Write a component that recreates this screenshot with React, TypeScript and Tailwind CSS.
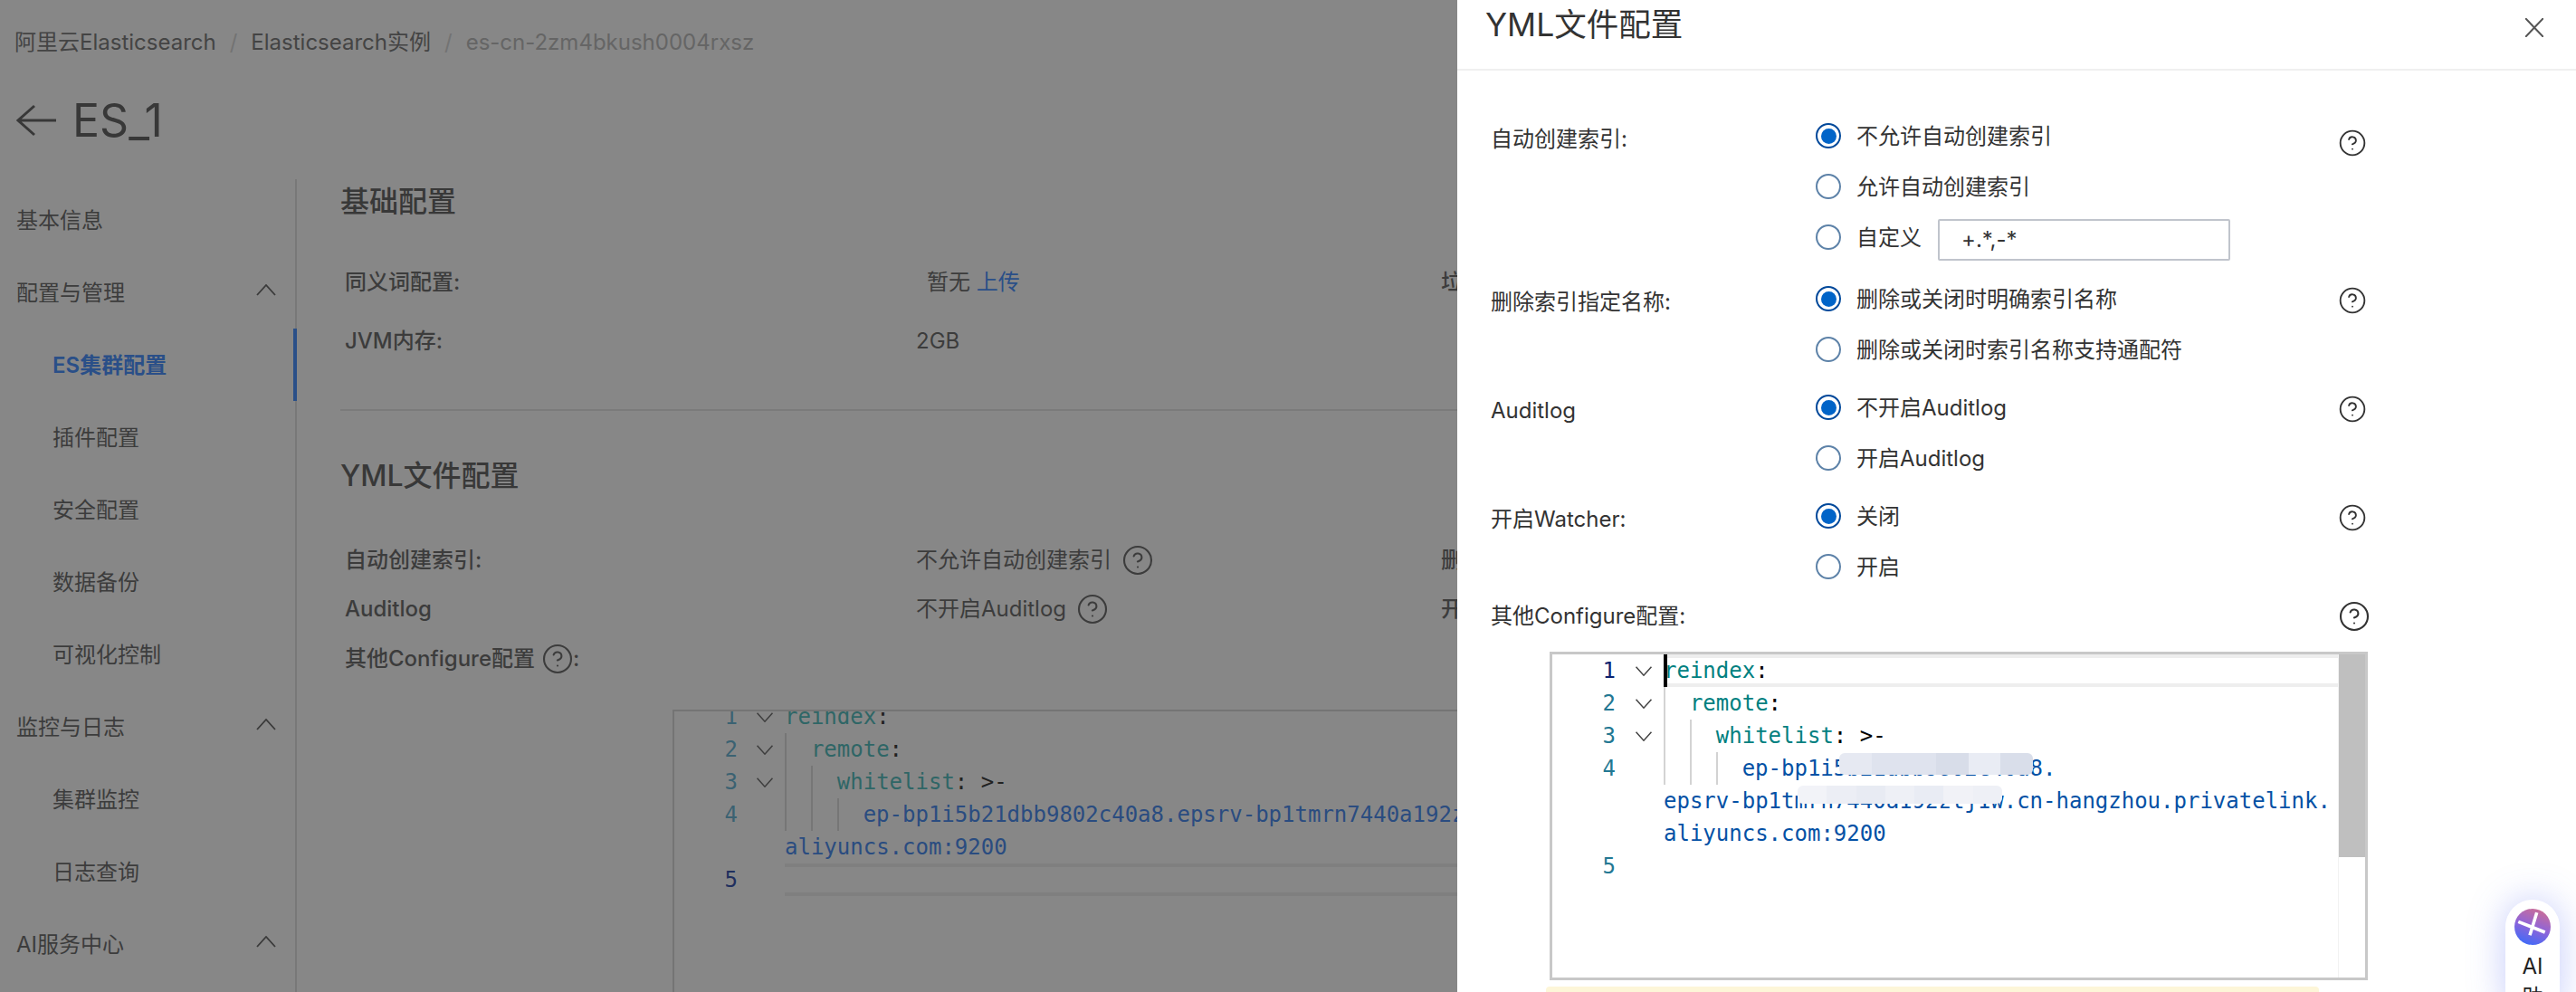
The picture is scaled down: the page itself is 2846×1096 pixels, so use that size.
import React from 'react';
import { CircleHelp } from 'lucide-react';

const sans = "font-['Inter','Noto_Sans_CJK_SC',sans-serif]";
const mono = "font-['DejaVu_Sans_Mono','Noto_Sans_CJK_SC',monospace]";

function Chevron({ up, className }: { up?: boolean; className?: string }) {
  return (
    <svg width="22" height="13" viewBox="0 0 22 13" fill="none" className={className}>
      <polyline points={up ? '1,12 11,1 21,12' : '1,1 11,12 21,1'} stroke="currentColor" strokeWidth="1.8" />
    </svg>
  );
}

function NavItem({ label, sub, open, active }: { label: string; sub?: boolean; open?: boolean; active?: boolean }) {
  return (
    <div className={`h-[80px] flex items-center justify-between pr-[19px] -mr-[2px] border-r-4 ${active ? 'border-[#2a4f88]' : 'border-transparent'} ${sub ? 'pl-[58px]' : 'pl-[18px]'}`}>
      <span className={`mt-[2px] ${active ? 'font-semibold text-[#2a4f88]' : 'text-[#3c3c3c]'}`}>{label}</span>
      {open && <Chevron up className="text-[#3a3a3a] -mt-[6px]" />}
    </div>
  );
}

type LineProps = {
  n?: number;
  fold?: boolean;
  guides?: number;
  active?: boolean;
  dim?: boolean;
  children?: React.ReactNode;
};

function CodeLine({ n, fold, guides = 0, active, dim, children }: LineProps) {
  const numColor = dim
    ? n === 5 ? 'text-[#1f2f5e]' : 'text-[#3b6272]'
    : active ? 'text-[#0b216f]' : 'text-[#237893]';
  return (
    <div className="flex h-[36px] leading-[36px]">
      <div className={`w-[70px] text-right shrink-0 ${numColor}`}>{n}</div>
      <div className={`w-[20px] shrink-0 flex items-center ${dim ? 'ml-[20px] mr-[12px] text-[#3e3e3e]' : 'ml-[21px] mr-[12px] text-[#444]'}`}>
        {fold && <Chevron className="w-[20px] h-[11px]" />}
      </div>
      <div className={`flex-1 flex whitespace-pre min-w-0 ${active ? (dim ? 'border-y-4 border-[#7f7f7f] leading-[28px]' : 'border-y-4 border-[#eeeeee] leading-[28px]') : ''}`}>
        {Array.from({ length: guides }).map((_, i) => (
          <span key={i} className={`inline-block w-[2ch] shrink-0 border-l-2 ${dim ? 'border-[#767676]' : 'border-[#d3d3d3]'}`} />
        ))}
        {children}
      </div>
    </div>
  );
}

function Radio({ label, checked, children }: { label: string; checked?: boolean; children?: React.ReactNode }) {
  return (
    <div className="h-[56px] flex items-center">
      <span className={`w-[28px] h-[28px] rounded-full border-2 bg-white flex items-center justify-center shrink-0 ${checked ? 'border-[#00489a]' : 'border-[#5d82a8]'}`}>
        {checked && <span className="w-[17px] h-[17px] rounded-full bg-[#0064c8]" />}
      </span>
      <span className="ml-[17px] mt-[2px] text-[#333]">{label}</span>
      {children}
    </div>
  );
}

function FormRow({ label, options, className, helpClass, extra }: { label: string; options: [string, boolean][]; className?: string; helpClass: string; extra?: React.ReactNode }) {
  return (
    <div className={`grid grid-cols-[359px_579px_30px] ${className ?? ''}`}>
      <div className="h-[56px] mt-[4px] flex items-center text-[#333]">{label}</div>
      <div>
        {options.map(([text, checked]) => (
          <Radio key={text} label={text} checked={checked} />
        ))}
        {extra}
      </div>
      <div className={`h-[56px] flex items-center ${helpClass}`}>
        <CircleHelp size={36} strokeWidth={1.4} className="text-[#333] -ml-[2px]" />
      </div>
    </div>
  );
}

function Breadcrumb() {
  return (
    <div className="h-[94px] flex items-center pl-[16px] text-[#444]">
      <span>阿里云Elasticsearch</span>
      <span className="mx-[15px] text-[#737373]">/</span>
      <span>Elasticsearch实例</span>
      <span className="mx-[15px] text-[#737373]">/</span>
      <span className="text-[#656565]">es-cn-2zm4bkush0004rxsz</span>
    </div>
  );
}

function LeftPane() {
  const nav: { label: string; sub?: boolean; open?: boolean; active?: boolean }[] = [
    { label: '基本信息' },
    { label: '配置与管理', open: true },
    { label: 'ES集群配置', sub: true, active: true },
    { label: '插件配置', sub: true },
    { label: '安全配置', sub: true },
    { label: '数据备份', sub: true },
    { label: '可视化控制', sub: true },
    { label: '监控与日志', open: true },
    { label: '集群监控', sub: true },
    { label: '日志查询', sub: true },
    { label: 'AI服务中心', open: true },
  ];
  const key = 'text-[#2f6666]';
  const val = 'text-[#2a4c80]';
  return (
    <div className="w-[1610px] shrink-0 h-full bg-[#878787] overflow-hidden flex flex-col">
      <Breadcrumb />
      <div className="h-[78px] flex items-center pl-[18px] text-[#383838]">
        <svg width="44" height="36" viewBox="0 0 44 36" fill="none" stroke="currentColor" strokeWidth="3">
          <path d="M20 2 L2 18 L20 34 M2 18 H44" />
        </svg>
        <span className="ml-[18px] text-[50px] leading-none">ES_1</span>
      </div>
      <div className="mt-[26px] flex flex-1 min-h-0">
        <div className="w-[328px] shrink-0 border-r-2 border-[#787878] pt-[5px]">
          {nav.map((item) => (
            <NavItem key={item.label} {...item} />
          ))}
        </div>
        <div className="flex-1 min-w-0 pl-[48px] text-[#3c3c3c] whitespace-nowrap">
          <div className="h-[50px] flex items-center text-[32px] font-medium text-[#383838]">基础配置</div>
          <div className="mt-[44px] h-[40px] pl-[5px] flex items-center">
            <span className="w-[643px] shrink-0 font-medium">同义词配置:</span>
            <span className="w-[568px] shrink-0">暂无 <span className="text-[#2a4f88]">上传</span></span>
            <span className="shrink-0 font-medium">垃圾</span>
          </div>
          <div className="mt-[25px] h-[40px] pl-[5px] flex items-center">
            <span className="w-[631px] shrink-0 font-medium">JVM内存:</span>
            <span>2GB</span>
          </div>
          <div className="mt-[55px] h-[2px] bg-[#7b7b7b]" />
          <div className="mt-[47px] h-[50px] flex items-center text-[32px] font-medium text-[#383838]">YML文件配置</div>
          <div className="mt-[48px] h-[40px] pl-[5px] flex items-center">
            <span className="w-[631px] shrink-0 font-medium">自动创建索引:</span>
            <span className="w-[580px] shrink-0 flex items-center gap-[11px]">不允许自动创建索引 <CircleHelp size={36} strokeWidth={1.4} /></span>
            <span className="shrink-0 font-medium">删除</span>
          </div>
          <div className="mt-[14px] h-[40px] pl-[5px] flex items-center">
            <span className="w-[631px] shrink-0 font-medium">Auditlog</span>
            <span className="w-[580px] shrink-0 flex items-center gap-[11px]">不开启Auditlog <CircleHelp size={36} strokeWidth={1.4} /></span>
            <span className="shrink-0 font-medium">开启</span>
          </div>
          <div className="mt-[15px] h-[40px] pl-[5px] flex items-center font-medium">
            其他Configure配置 <CircleHelp size={36} strokeWidth={1.4} className="ml-[7px] -mr-[1px]" />:
          </div>
          <div className={`mt-[36px] ml-[367px] h-[400px] border-t-2 border-l-2 border-[#747474] overflow-hidden text-[24px] ${mono}`}>
            <div className="-mt-[12px]">
              <CodeLine dim n={1} fold><span className={key}>reindex</span><span className="text-[#222]">:</span></CodeLine>
              <CodeLine dim n={2} fold guides={1}><span className={key}>remote</span><span className="text-[#222]">:</span></CodeLine>
              <CodeLine dim n={3} fold guides={2}><span className={key}>whitelist</span><span className="text-[#222]">: &gt;-</span></CodeLine>
              <CodeLine dim n={4} guides={3}><span className={val}>ep-bp1i5b21dbb9802c40a8.epsrv-bp1tmrn7440a192ztj1w.cn-hangzhou.privatelink.</span></CodeLine>
              <CodeLine dim><span className={val}>aliyuncs.com:9200</span></CodeLine>
              <CodeLine dim n={5} active />
            </div>
          </div>
        </div>
      </div>
    </div>
  );
}

function BlurPatch({ className, tones }: { className: string; tones: string[] }) {
  return (
    <div className={`absolute flex rounded-[6px] overflow-hidden ${className}`}>
      {tones.map((tone, i) => (
        <div key={i} className={`flex-1 ${tone}`} />
      ))}
    </div>
  );
}

function Editor() {
  const key = 'text-[#008080]';
  const val = 'text-[#0451a5]';
  return (
    <div className={`relative ml-[102px] w-[904px] h-[363px] shrink-0 mt-[11px] border-[3px] border-[#c8c8c8] overflow-hidden text-[24px] ${mono}`}>
      <CodeLine n={1} fold active><span className="w-[4px] bg-black -my-[4px] h-[36px] shrink-0 -mr-[4px]" /><span className={key}>reindex</span><span className="text-black">:</span></CodeLine>
      <CodeLine n={2} fold guides={1}><span className={key}>remote</span><span className="text-black">:</span></CodeLine>
      <CodeLine n={3} fold guides={2}><span className={key}>whitelist</span><span className="text-black">: &gt;-</span></CodeLine>
      <CodeLine n={4} guides={3}><span className={val}>ep-bp1i5b21dbb9802c40a8.</span></CodeLine>
      <CodeLine><span className={val}>epsrv-bp1tmrn7440a192ztj1w.cn-hangzhou.privatelink.</span></CodeLine>
      <CodeLine><span className={val}>aliyuncs.com:9200</span></CodeLine>
      <CodeLine n={5} />
      <BlurPatch
        className="left-[317px] top-[109px] w-[214px] h-[24px]"
        tones={['bg-[#e6e9f2]', 'bg-[#dfe3ee]', 'bg-[#dfe3ee]', 'bg-[#d8dde9]', 'bg-[#e9ecf4]', 'bg-[#d9deea]']}
      />
      <BlurPatch
        className="left-[271px] top-[145px] w-[226px] h-[20px]"
        tones={['bg-[#f2f3f8]', 'bg-[#eceef5]', 'bg-[#e8ebf3]', 'bg-[#eef0f6]', 'bg-[#e9ecf4]', 'bg-[#f1f2f7]', 'bg-[#eef0f6]']}
      />
      <div className="absolute right-0 top-0 bottom-0 w-[30px] border-l border-[#f2f2f2]">
        <div className="h-[224px] bg-[#bfbfbf]" />
      </div>
    </div>
  );
}

function Drawer() {
  return (
    <div className="flex-1 min-w-0 h-full bg-white overflow-hidden flex flex-col">
      <div className="h-[78px] shrink-0 border-b-2 border-[#f0f0f0] flex justify-between pl-[31px] pr-[36px]">
        <div className="h-[56px] flex items-center text-[35.5px] text-[#333]">YML文件配置</div>
        <svg width="20" height="21" viewBox="0 0 20 21" fill="none" stroke="#555" strokeWidth="2" className="mt-[20px]">
          <path d="M0 0 L20 21 M20 0 L0 21" />
        </svg>
      </div>
      <div className="pt-[44px] pl-[37px]">
        <FormRow
          label="自动创建索引:"
          options={[['不允许自动创建索引', true], ['允许自动创建索引', false]]}
          className="mb-[12px]"
          helpClass="mt-[8px]"
          extra={
            <Radio label="自定义">
              <div className="ml-[18px] mt-[6px] w-[323px] h-[46px] border-2 border-[#c0c4cc] rounded-[2px] pl-[24px] flex items-center text-[#333]">+.*,-*</div>
            </Radio>
          }
        />
        <FormRow label="删除索引指定名称:" options={[['删除或关闭时明确索引名称', true], ['删除或关闭时索引名称支持通配符', false]]} className="mb-[8px]" helpClass="mt-[2px]" />
        <FormRow label="Auditlog" options={[['不开启Auditlog', true], ['开启Auditlog', false]]} className="mb-[8px]" helpClass="mt-[2px]" />
        <FormRow label="开启Watcher:" options={[['关闭', true], ['开启', false]]} helpClass="mt-[2px]" />
        <div className="grid grid-cols-[938px_30px] h-[56px] -mt-[1px] items-center">
          <div className="text-[#333]">其他Configure配置:</div>
          <CircleHelp size={36} strokeWidth={1.4} className="text-[#333] -ml-[2px]" />
        </div>
      </div>
      <Editor />
      <div className="ml-[98px] mt-[7px] w-[854px] h-[20px] shrink-0 bg-[#fdf6d8] rounded-t-[4px]" />
    </div>
  );
}

function AiBadge() {
  return (
    <div className="absolute right-[18px] top-[994px] w-[60px] h-[130px] rounded-full bg-white shadow-[0_0_40px_rgba(90,110,240,0.35)] flex flex-col items-center pt-[10px] text-[24px] leading-[34px] text-[#222]">
      <div className="w-[40px] h-[40px] rounded-full bg-[linear-gradient(200deg,#d8708a,#8f64d8_50%,#2e6cff)] mb-[7px]">
        <svg width="40" height="40" viewBox="0 0 40 40" fill="none" stroke="white" strokeWidth="3.6">
          <path d="M4.3 14.3 L33.7 26 M24.7 4.3 L17 29.3" />
        </svg>
      </div>
      <div>AI</div>
      <div>助</div>
    </div>
  );
}

export default function App() {
  return (
    <div className={`relative flex w-full h-[1096px] overflow-hidden text-[24px] ${sans}`}>
      <LeftPane />
      <Drawer />
      <AiBadge />
    </div>
  );
}
